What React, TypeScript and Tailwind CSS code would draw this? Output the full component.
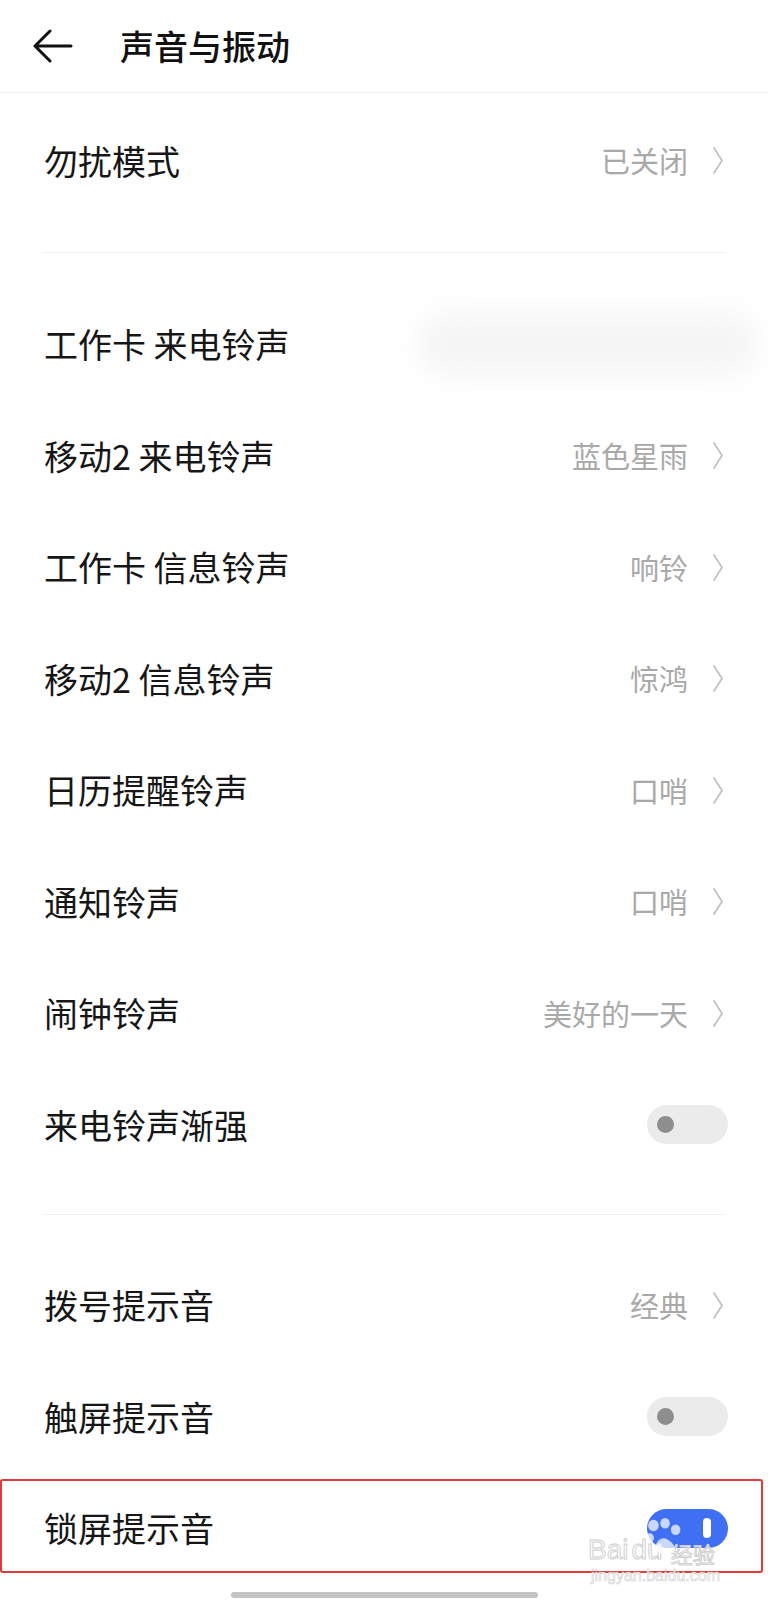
import React from "react";

type Row =
  | { id: string; label: string; kind: "link"; value: string }
  | { id: string; label: string; kind: "hidden" }
  | { id: string; label: string; kind: "toggle"; on: boolean };

const RINGTONES: Row[] = [
  { id: "work-call", label: "工作卡 来电铃声", kind: "hidden" },
  { id: "m2-call", label: "移动2 来电铃声", kind: "link", value: "蓝色星雨" },
  { id: "work-msg", label: "工作卡 信息铃声", kind: "link", value: "响铃" },
  { id: "m2-msg", label: "移动2 信息铃声", kind: "link", value: "惊鸿" },
  { id: "calendar", label: "日历提醒铃声", kind: "link", value: "口哨" },
  { id: "notify", label: "通知铃声", kind: "link", value: "口哨" },
  { id: "alarm", label: "闹钟铃声", kind: "link", value: "美好的一天" },
  { id: "fade-in", label: "来电铃声渐强", kind: "toggle", on: false },
];

const FEEDBACK: Row[] = [
  { id: "dial", label: "拨号提示音", kind: "link", value: "经典" },
  { id: "touch", label: "触屏提示音", kind: "toggle", on: false },
  { id: "lock", label: "锁屏提示音", kind: "toggle", on: true },
];

function Chevron() {
  return (
    <svg width="12" height="27" viewBox="0 0 12 27" fill="none" className="shrink-0">
      <polyline points="2,1 10,13.5 2,26" stroke="#c2c2c2" strokeWidth="1.8" strokeLinejoin="round" strokeLinecap="round" />
    </svg>
  );
}

function Toggle({ on }: { on: boolean }) {
  if (on) {
    return (
      <div className="-mr-[4px] flex h-[39px] w-[81px] items-center justify-end rounded-full bg-[#3f6ff2] pr-[17px]">
        <div className="h-[20px] w-[8px] rounded-full bg-white" />
      </div>
    );
  }
  return (
    <div className="-mr-[4px] flex h-[39px] w-[81px] items-center rounded-full bg-[#ebebeb] pl-[10px]">
      <div className="h-[17px] w-[17px] rounded-full bg-[#8e8e8e]" />
    </div>
  );
}

function SettingRow({ row }: { row: Row }) {
  return (
    <div className="relative flex h-[111.5px] items-center justify-between px-[44px]">
      <span className="text-[34px] leading-none text-[#161616]">{row.label}</span>
      {row.kind === "link" && (
        <div className="flex items-center gap-[24px]">
          <span className="text-[29px] leading-none text-[#a9a9a9]">{row.value}</span>
          <Chevron />
        </div>
      )}
      {row.kind === "hidden" && (
        <div className="-mr-[34px] h-[62px] w-[340px] rounded-full bg-[#f5f5f5] blur-[14px]" />
      )}
      {row.kind === "toggle" && <Toggle on={row.on} />}
      {row.id === "lock" && (
        <>
          <div className="pointer-events-none absolute top-[6.5px] right-[5px] bottom-[11px] left-0 rounded-[3px] border-2 border-[#e23a36]" />
          <Watermark />
        </>
      )}
    </div>
  );
}

// baidu jingyan watermark that sits over the screenshot corner
function Watermark() {
  return (
    <div className="pointer-events-none absolute top-[63px] left-[588px] flex flex-col items-start">
      <div className="relative flex items-end leading-none text-white/90 [-webkit-text-stroke:1px_#cfcfcf]">
        <span className="text-[28px] [font-family:'Liberation_Sans',sans-serif]">Bai</span>
        <span className="ml-[3px] text-[28px] [font-family:'Liberation_Sans',sans-serif]">du</span>
        <span className="ml-[8px] text-[22px]">经验</span>
        <svg width="38" height="36" viewBox="0 0 36 34" className="absolute top-[-18px] left-[57px]">
          <g fill="#ffffff" fillOpacity="0.72">
            <ellipse cx="8" cy="7" rx="5" ry="5.5" />
            <ellipse cx="19" cy="5" rx="4.5" ry="5" />
            <ellipse cx="29" cy="11" rx="4.5" ry="5" />
            <ellipse cx="4.5" cy="19" rx="4" ry="4.5" />
            <path d="M10 30 C 9 22, 16 17, 21 20 C 27 23, 31 30, 26 33 C 20 35, 12 34, 10 30 Z" />
          </g>
        </svg>
      </div>
      <span className="mt-[4px] ml-[3px] text-[16px] leading-none text-white/90 [-webkit-text-stroke:0.6px_#cfcfcf] [font-family:'Liberation_Sans',sans-serif]">
        jingyan.baidu.com
      </span>
    </div>
  );
}

export default function App() {
  return (
    <div className="w-[768px] bg-white [font-family:'Noto_Sans_CJK_SC','Noto_Sans',sans-serif]">
      <header className="flex h-[93px] items-center border-b border-[#f2f2f2]">
        <svg width="40" height="34" viewBox="0 0 40 34" className="ml-[33px]" fill="none">
          <path d="M38 17 H3 M17 2 L2 17 L17 32" stroke="#111" strokeWidth="3" strokeLinecap="round" strokeLinejoin="round" />
        </svg>
        <h1 className="ml-[47px] text-[34px] leading-none font-medium text-[#111]">声音与振动</h1>
      </header>

      <div className="mt-[12px]">
        <SettingRow row={{ id: "dnd", label: "勿扰模式", kind: "link", value: "已关闭" }} />
      </div>

      <div className="mx-[44px] mt-[35px] mb-[36px] h-px bg-[#f0f0f0]" />

      {RINGTONES.map((row) => (
        <SettingRow key={row.id} row={row} />
      ))}

      <div className="mx-[44px] mt-[33px] mb-[35px] h-px bg-[#f0f0f0]" />

      {FEEDBACK.map((row) => (
        <SettingRow key={row.id} row={row} />
      ))}

      <div className="flex justify-center pt-[8px] pb-[2px]">
        <div className="h-[6px] w-[307px] rounded-full bg-[#c4c4c4]" />
      </div>
    </div>
  );
}
